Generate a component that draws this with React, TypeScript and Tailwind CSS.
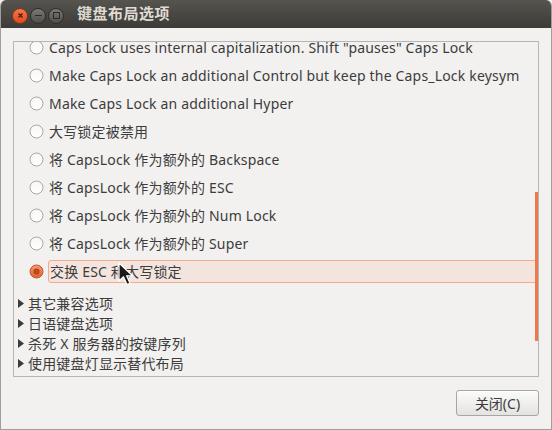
import React from "react";

const FONT = {
  fontFamily: '"Noto Sans", "Noto Sans CJK SC", sans-serif',
};

const radioItems = [
  "Caps Lock uses internal capitalization. Shift \"pauses\" Caps Lock",
  "Make Caps Lock an additional Control but keep the Caps_Lock keysym",
  "Make Caps Lock an additional Hyper",
  "大写锁定被禁用",
  "将 CapsLock 作为额外的 Backspace",
  "将 CapsLock 作为额外的 ESC",
  "将 CapsLock 作为额外的 Num Lock",
  "将 CapsLock 作为额外的 Super",
];

const expanders = [
  "其它兼容选项",
  "日语键盘选项",
  "杀死 X 服务器的按键序列",
  "使用键盘灯显示替代布局",
];

function Radio({ checked }: { checked?: boolean }) {
  if (checked) {
    return (
      <svg width="15" height="15" viewBox="0 0 15 15" className="shrink-0">
        <defs>
          <linearGradient id="rg" x1="0" y1="0" x2="0" y2="1">
            <stop offset="0" stopColor="#f59a72" />
            <stop offset="1" stopColor="#e0602c" />
          </linearGradient>
        </defs>
        <circle cx="7.5" cy="7.5" r="6.5" fill="url(#rg)" stroke="#c4552a" strokeWidth="1" />
        <circle cx="7.5" cy="7.5" r="3" fill="#b0421c" />
        <circle cx="7.5" cy="7.5" r="2" fill="#c24a20" />
      </svg>
    );
  }
  return (
    <svg width="15" height="15" viewBox="0 0 15 15" className="shrink-0">
      <defs>
        <linearGradient id="ru" x1="0" y1="0" x2="0" y2="1">
          <stop offset="0" stopColor="#f6f6f5" />
          <stop offset="1" stopColor="#ffffff" />
        </linearGradient>
      </defs>
      <circle cx="7.5" cy="7.5" r="6.5" fill="url(#ru)" stroke="#a9a8a5" strokeWidth="1" />
    </svg>
  );
}

function Cursor() {
  return (
    <svg
      width="16"
      height="26"
      viewBox="0 0 16 26"
      className="absolute left-[117px] top-[262px]"
    >
      <path
        d="M1 1 L1 19 L5.5 14.8 L9 22.5 L12 21.2 L8.6 13.8 L14.5 13.8 Z"
        fill="#1a1a1a"
        stroke="#ffffff"
        strokeWidth="1.2"
        strokeLinejoin="round"
      />
    </svg>
  );
}

export default function App() {
  return (
    <div className="w-[552px] h-[430px] bg-[#f2f1f0]" style={FONT}>
      <div className="relative w-[552px] h-[430px] flex flex-col rounded-t-[6px] overflow-hidden border-x border-b border-[#9f9e9b] bg-[#f2f1f0]">
        {/* Title bar */}
        <div className="h-[28px] shrink-0 flex items-center bg-gradient-to-b from-[#55544f] to-[#3c3b37] pl-[4px]">
          <div className="flex items-center gap-[2px] pt-[3px]">
            <div className="w-[16px] h-[16px] rounded-full bg-gradient-to-b from-[#f7764a] to-[#e0471b] border border-[#7e3a1f] flex items-center justify-center ml-[7px]">
              <svg width="7" height="7" viewBox="0 0 7 7">
                <path d="M1.5 1.5 L5.5 5.5 M5.5 1.5 L1.5 5.5" stroke="#4a1a0c" strokeWidth="1.3" />
              </svg>
            </div>
            <div className="w-[16px] h-[16px] rounded-full bg-gradient-to-b from-[#7b7a75] to-[#4f4e4a] border border-[#2e2d2a] flex items-center justify-center">
              <div className="w-[7px] h-[1.5px] bg-[#2c2b28]" />
            </div>
            <div className="w-[16px] h-[16px] rounded-full bg-gradient-to-b from-[#7b7a75] to-[#4f4e4a] border border-[#2e2d2a] flex items-center justify-center">
              <div className="w-[7px] h-[7px] border border-[#2c2b28]" />
            </div>
          </div>
          <div className="ml-[13px] text-[15px] font-bold text-[#dfdbd2] leading-none -mt-[1px] tracking-[0.5px]">
            键盘布局选项
          </div>
        </div>

        {/* Body */}
        <div className="flex-1 flex flex-col pl-[12px] pr-[12px]">
          <div className="mt-[13px] h-[336px] border border-[#b6b5b2] relative overflow-hidden">
            <div className="-mt-[9px] flex flex-col">
              {radioItems.map((t) => (
                <div key={t} className="h-[28px] flex items-center pl-[15px]">
                  <Radio />
                  <span className="ml-[5px] text-[14px] tracking-[0.18px] text-[#3c3c3c] whitespace-nowrap">
                    {t}
                  </span>
                </div>
              ))}
              <div className="h-[28px] flex items-center pl-[15px]">
                <Radio checked />
                <div className="ml-[4px] flex-1 h-[23px] flex items-center border border-[#f4aa8c] bg-[#f3e5de] rounded-l-[3px] pl-[1px] mr-[2px]">
                  <span className="text-[14px] tracking-[0.18px] text-[#3c3c3c] whitespace-nowrap">
                    交换 ESC 和大写锁定
                  </span>
                </div>
              </div>
              <div className="h-[8px]" />
              {expanders.map((t) => (
                <div key={t} className="h-[20px] flex items-center pl-[4px]">
                  <svg width="6" height="9" viewBox="0 0 6 9" className="shrink-0">
                    <path d="M0 0 L6 4.5 L0 9 Z" fill="#3c3c3c" />
                  </svg>
                  <span className="ml-[4px] text-[14px] tracking-[0.18px] text-[#3c3c3c] whitespace-nowrap">
                    {t}
                  </span>
                </div>
              ))}
            </div>
            {/* overlay scrollbar */}
            <div className="absolute right-0 top-[150px] w-[3px] h-[149px] bg-[#ed7a4d]" />
          </div>
          <div className="flex justify-end mt-[13px]">
            <button className="w-[83px] h-[26px] rounded-[3px] border border-[#a7a6a3] bg-gradient-to-b from-[#fbfbfa] to-[#e4e3e1] text-[14px] text-[#3c3c3c] flex items-center justify-center shadow-[inset_0_1px_0_#ffffff]">
              关闭(C)
            </button>
          </div>
        </div>
        <Cursor />
      </div>
    </div>
  );
}
